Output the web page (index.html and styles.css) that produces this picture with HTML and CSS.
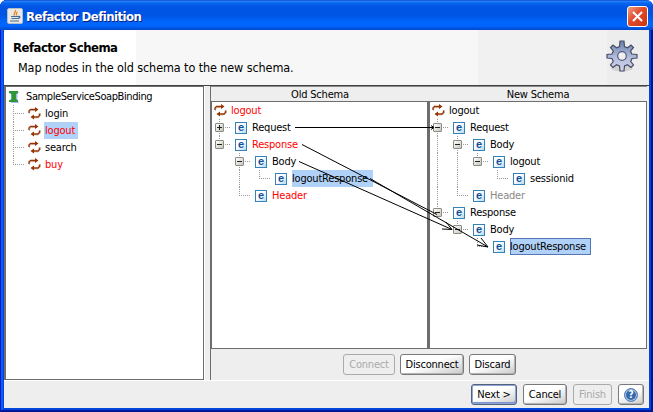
FILE: index.html
```
<!DOCTYPE html>
<html lang="en">
<head>
<meta charset="utf-8">
<title>Refactor Definition</title>
<link rel="stylesheet" href="styles.css">
</head>
<body>
<svg class="defs" aria-hidden="true">
  <defs>
    <symbol id="op" viewBox="0 0 13 13">
      <path d="M1.500 7V5L3.500 3.500H9M12.500 6v3L10 11H5" fill="none" stroke="#ccc"/>
      <path d="M1 6V4L2.500 2.500H8M11.500 6.500v2L10 10H5" fill="none" stroke="#993300" stroke-width="1.400"/>
      <path d="M7 0l3.500 2.500L7 5zM6 7.500L2.500 10 6 12.500z" fill="#993300"/>
    </symbol>
    <linearGradient id="gg" y2="1" x2="0"><stop stop-color="#6680ac"/><stop offset=".55" stop-color="#b3bddb"/><stop offset="1" stop-color="#d7d7ee"/></linearGradient>
  </defs>
</svg>
<div class="window">
  <header class="titlebar">
    <svg class="java" viewBox="0 0 16 16"><rect x=".5" y=".5" width="15" height="15" rx="1.500" fill="#e8e8e6" stroke="#b8bdc4"/><path d="M8.500 2c1 2-3 3-1 5.500M10.500 4c-2 1.500-1 2-1 3.500" fill="none" stroke="#e8801a" stroke-width="1.300"/><path d="M4 8.500h7M4.500 10.500h6M3 13h9M11 8.500c3-.5 2 2-.5 2" fill="none" stroke="#456b91" stroke-width="1.200"/></svg>
    <span class="caption">Refactor Definition</span>
    <span class="close"><svg viewBox="0 0 21 21"><path d="M5.500 5.500l10 10M15.500 5.500l-10 10" stroke="#fff" stroke-width="2.300"/></svg></span>
  </header>
  <section class="banner">
    <div><h1>Refactor Schema</h1><p>Map nodes in the old schema to the new schema.</p></div>
    <svg class="gear" viewBox="0 0 32 32"><ellipse cx="16" cy="28" rx="11" ry="3.500" fill="#d2d2d2"/><path d="M13.500 6.500L14 1h4l.5 5.500 3 1.300L25 5l2.500 2.500L24.500 11l1.300 3L31 14.500v3.500l-5 .5-1.300 3L27.500 25 25 27.500l-3.500-2.800-3 1.300L18 31h-4l-.5-5-3-1.300L7 27.500 4.500 25l2.800-3.500-1.300-3L1 18v-3.500L6 14l1.300-3L4.500 7.500 7 5l3.500 2.800z" fill="url(#gg)" stroke="#484d67" stroke-width="1.200"/><circle cx="16" cy="16" r="4.300" fill="#efefef" stroke="#555c7c" stroke-width="1.200"/></svg>
  </section>
  <main class="content">
    <div class="panel bindings">
      <div class="row root"><svg class="binding" viewBox="0 0 12 13"><path d="M2 2h8l-1.500 2v6l1.500 3H2z" fill="#a9b8ec"/><path d="M0 1h9v2L7 4v5l2 1.500V12H0v-1.500L2.500 9V4L0 3z" fill="#2f9637"/></svg><span class="label">SampleServiceSoapBinding</span></div>
      <div class="row"><i class="cell tee"></i><svg class="icon"><use href="#op"/></svg><span class="label">login</span></div>
      <div class="row"><i class="cell tee"></i><svg class="icon"><use href="#op"/></svg><span class="label red picked">logout</span></div>
      <div class="row"><i class="cell tee"></i><svg class="icon"><use href="#op"/></svg><span class="label">search</span></div>
      <div class="row"><i class="cell end"></i><svg class="icon"><use href="#op"/></svg><span class="label red">buy</span></div>
    </div>
    <div class="mapping">
      <div class="heads"><span>Old Schema</span><span>New Schema</span></div>
      <div class="trees">
        <div class="tree">
          <div class="row root"><svg class="icon"><use href="#op"/></svg><span class="label red">logout</span></div>
          <div class="row"><i class="cell tee"><b class="box plus"></b></i><i class="e">e</i><span class="label">Request</span></div>
          <div class="row"><i class="cell end"><b class="box"></b></i><i class="e">e</i><span class="label red">Response</span></div>
          <div class="row"><i class="cell"></i><i class="cell tee"><b class="box"></b></i><i class="e">e</i><span class="label">Body</span></div>
          <div class="row"><i class="cell"></i><i class="cell bar"></i><i class="cell end"></i><i class="e">e</i><span class="label picked resp">logoutResponse</span></div>
          <div class="row"><i class="cell"></i><i class="cell end"></i><i class="e">e</i><span class="label red">Header</span></div>
        </div>
        <div class="tree">
          <div class="row root"><svg class="icon"><use href="#op"/></svg><span class="label">logout</span></div>
          <div class="row"><i class="cell tee"><b class="box"></b></i><i class="e">e</i><span class="label">Request</span></div>
          <div class="row"><i class="cell bar"></i><i class="cell tee"><b class="box"></b></i><i class="e">e</i><span class="label">Body</span></div>
          <div class="row"><i class="cell bar"></i><i class="cell bar"></i><i class="cell end"><b class="box"></b></i><i class="e">e</i><span class="label">logout</span></div>
          <div class="row"><i class="cell bar"></i><i class="cell bar"></i><i class="cell"></i><i class="cell end"></i><i class="e">e</i><span class="label">sessionid</span></div>
          <div class="row"><i class="cell bar"></i><i class="cell end"></i><i class="e">e</i><span class="label gray">Header</span></div>
          <div class="row"><i class="cell end"><b class="box"></b></i><i class="e">e</i><span class="label">Response</span></div>
          <div class="row"><i class="cell"></i><i class="cell end"><b class="box"></b></i><i class="e">e</i><span class="label">Body</span></div>
          <div class="row"><i class="cell"></i><i class="cell"></i><i class="cell end"></i><i class="e">e</i><span class="label picked focus resp">logoutResponse</span></div>
        </div>
        <svg class="links" viewBox="210 101 437 248"><path d="M295 127.500H433M431 125.500l3 2-3 2M302 144.500L437 214.500M299 161.500L452 229.500M446 222l6 7.500-10-.5M370 178.500L488 247M481 238l7 9-11-2"/></svg>
      </div>
      <div class="actions"><button class="connect" disabled>Connect</button><button class="disconnect">Disconnect</button><button class="discard">Discard</button></div>
    </div>
  </main>
  <footer class="footer">
    <button class="next">Next &gt;</button><button class="cancel">Cancel</button><button class="finish" disabled>Finish</button><button class="help" aria-label="Help"><span>?</span></button>
  </footer>
</div>
</body>
</html>
```
FILE: styles.css
```
* { box-sizing: border-box; }
body {
  margin: 0;
  background: #fff;
  font: 11px "DejaVu Sans Condensed", "DejaVu Sans", sans-serif;
  font-stretch: condensed;
  letter-spacing: -0.2px;
  color: #000;
  overflow: hidden;
}
.defs { position: absolute; width: 0; height: 0; }
.window {
  width: 653px;
  height: 412px;
  display: flex;
  flex-direction: column;
  padding: 0 4px 4px;
  border-radius: 7px 7px 0 0;
  background: #0046dd;
  box-shadow: inset 1px 0 #0019c8, inset -2px -2px #001597, inset 3px 0 #0b5cf0;
  overflow: hidden;
}
.titlebar {
  height: 30px;
  flex: none;
  margin: 0 -4px;
  padding: 0 5px 0 7px;
  display: flex;
  align-items: center;
  background: linear-gradient(#0039b8 0, #2b83fb 1px, #0966ef 3px, #0054e3 7px, #0054e3 15px, #0065fc 22px, #0065fc 26px, #0046cc 30px);
}
.java { width: 16px; height: 16px; margin-top: 2px; }
.caption {
  flex: 1;
  margin: 3px 0 0 3px;
  color: #fff;
  font-size: 13px;
  font-weight: bold;
  letter-spacing: -0.53px;
  text-shadow: 1px 1px #0a1f80;
}
.close {
  width: 21px;
  height: 21px;
  margin-top: 3px;
  border: 1px solid #fff;
  border-radius: 3px;
  background: linear-gradient(135deg, #f0a086, #e1492a 45%, #c93512);
}
.close svg { display: block; width: 19px; height: 19px; }
.banner {
  height: 55px;
  flex: none;
  display: flex;
  justify-content: space-between;
  padding: 10px 11px 0 9px;
  background: linear-gradient(90deg, #fff 132px, #f7f7f7 132px, #f7f7f7 474px, #f1f1f1 474px, #f1f1f1 603px, #ededed 603px);
}
h1 { margin: 0; font-size: 13px; line-height: 16px; letter-spacing: -0.5px; }
p { margin: 4px 0 0 5px; font-size: 12.5px; line-height: 16px; letter-spacing: -0.1px; white-space: nowrap; }
.gear { width: 32px; height: 32px; }
.content {
  height: 296px;
  flex: none;
  display: grid;
  grid-template-columns: 200px 439px;
  column-gap: 6px;
  background: #eee;
  border-top: 1px solid #41443d;
  border-bottom: 1px solid #fff;
}
.panel {
  height: 294px;
  border: solid #6d6d6d;
  border-width: 1px 1px 1px 2px;
  padding: 1px 0 0 3px;
  background: #fff;
  box-shadow: 1px 0 #fff;
}
.row { height: 17px; display: flex; align-items: center; white-space: nowrap; }
.icon { width: 13px; height: 13px; flex: none; }
.binding { width: 12px; height: 13px; flex: none; }
.root { margin-left: -1px; }
.label { height: 17px; padding: 0 3px 0 1px; margin-left: 3px; line-height: 17px; }
.bindings .cell { width: 19px; }
.bindings .root { margin-left: 0; }
.bindings .root .label { margin-left: 4px; letter-spacing: -0.4px; }
.red { color: #f00; }
.gray { color: #888; }
.picked { background: #b0d2f8; }
.resp { width: 81px; margin-left: 4px; padding-left: 0; }
.focus { box-shadow: inset 0 0 0 1px #5576b4; }
.cell { position: relative; width: 20px; height: 17px; flex: none; }
.bar, .tee { background: repeating-linear-gradient(#999 0 1px, #fff 1px 2px) 4px 0 / 1px 100% no-repeat; }
.end { background: repeating-linear-gradient(#999 0 1px, #fff 1px 2px) 4px 0 / 1px 9px no-repeat; }
.tee::after, .end::after {
  content: "";
  position: absolute;
  left: 4px;
  top: 8px;
  width: 12px;
  height: 1px;
  background: repeating-linear-gradient(90deg, #999 0 1px, #fff 1px 2px);
}
.box {
  position: absolute;
  z-index: 1;
  left: 0;
  top: 4px;
  width: 9px;
  height: 9px;
  border: 1px solid #8b8b86;
  border-radius: 1px;
  background: linear-gradient(#222, #222) 1px 3px / 5px 1px no-repeat, linear-gradient(135deg, #fff, #c9c5ba);
}
.plus { background: linear-gradient(#222, #222) 1px 3px / 5px 1px no-repeat, linear-gradient(#222, #222) 3px 1px / 1px 5px no-repeat, linear-gradient(135deg, #fff, #c9c5ba); }
.e {
  width: 12px;
  height: 12px;
  flex: none;
  margin-right: 1px;
  border: 1px solid #3482b8;
  background: linear-gradient(135deg, #fff 40%, #b5daf3);
  color: #124f98;
  font: bold 11px/9px "Liberation Sans", sans-serif;
  text-align: center;
  letter-spacing: 0;
}
.mapping { border-left: 1px solid #6d6d6d; display: flex; flex-direction: column; padding-right: 2px; }
.heads { height: 15px; display: grid; grid-template-columns: 218px 218px; border-top: 1px solid #8a8a8a; text-align: center; line-height: 15px; }
.trees { position: relative; height: 248px; margin-left: -1px; display: grid; grid-template-columns: 218px 219px; }
.tree { background: #fff; border: 1px solid #6d6d6d; border-left-width: 2px; padding-left: 3px; }
.links { position: absolute; z-index: 2; left: 0; top: 0; width: 437px; height: 248px; fill: none; stroke: #000; stroke-width: 1; }
.actions { display: flex; gap: 5px; padding: 5px 0 0 132px; }
button {
  height: 21px;
  padding: 0;
  border: 1px solid #77797b;
  border-radius: 3px;
  background: linear-gradient(160deg, #fff 45%, #c9c9c9);
  box-shadow: inset -1px -1px #b4b4b4;
  font: inherit;
  letter-spacing: inherit;
  line-height: 18px;
  color: #000;
}
button:disabled { color: #aaa; border-color: #aaa; background: #eee; box-shadow: none; }
.connect { width: 52px; }
.disconnect { width: 64px; }
.discard { width: 47px; }
.footer { height: 27px; flex: none; display: flex; justify-content: flex-end; padding: 3px 5px 0 0; background: #eee; }
.next { width: 46px; margin-right: 6px; border-color: #52617c; box-shadow: inset 0 0 0 1px #8ea6d3, inset -1px -2px #7896cd; }
.cancel { width: 44px; margin-right: 6px; }
.finish { width: 39px; margin-right: 6px; }
.help { width: 26px; display: flex; align-items: center; justify-content: center; }
.help span { width: 14px; height: 14px; border: 1px solid #6083b8; border-radius: 50%; background: #356aad; box-shadow: inset 0 0 0 1px #b9cbe5; color: #fff; font-weight: bold; font-size: 10px; line-height: 12px; }
```
